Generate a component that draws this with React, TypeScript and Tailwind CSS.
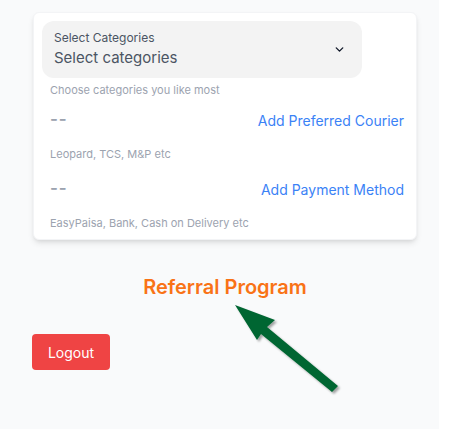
import { ChevronDown } from 'lucide-react'

const rows = [
  { action: 'Add Preferred Courier', hint: 'Leopard, TCS, M&P etc', gap: 'mt-[12px]' },
  { action: 'Add Payment Method', hint: 'EasyPaisa, Bank, Cash on Delivery etc', gap: 'mt-[17px]' },
]

function GuideArrow() {
  // annotation arrow pointing at the referral link
  return (
    <svg className="absolute left-[226px] top-[298px]" width="120" height="100" viewBox="0 0 120 100">
      <defs>
        <filter id="arrowShadow" x="-20%" y="-20%" width="140%" height="140%">
          <feDropShadow dx="2" dy="2" stdDeviation="1" floodColor="#000" floodOpacity="0.35" />
        </filter>
      </defs>
      <g filter="url(#arrowShadow)" fill="#006633">
        <polygon points="9,7 49,22 41,29 112,88 106,94 35,36 31,42" />
      </g>
    </svg>
  )
}

export default function App() {
  return (
    <div className="relative flex w-[468px] h-[429px] bg-white" style={{ fontFamily: 'Inter, "Noto Sans", sans-serif' }}>
      <div className="w-[439px] h-full bg-[#f9fafb] pl-[33px] pt-3">
        <div className="w-[384px] bg-white rounded-md shadow-md border border-gray-100 pt-2 pb-[8px]">
          <div className="mx-2 w-[320px] h-[57px] bg-[#f3f3f3] rounded-xl flex items-center justify-between pl-3 pr-4">
            <div className="flex flex-col">
              <span className="text-[12px] leading-4 text-[#4b5563]">Select Categories</span>
              <span className="text-[15px] leading-6 text-[#4b5563]">Select categories</span>
            </div>
            <ChevronDown size={13} strokeWidth={2.5} className="text-gray-900" />
          </div>
          <p className="pl-4 mt-[4px] text-[11px] leading-4 text-[#9ca3af]">Choose categories you like most</p>
          {rows.map((row) => (
            <div key={row.action} className="pl-4 pr-3">
              <div className={'flex items-center justify-between h-[20px] ' + row.gap}>
                <span className="text-[17px] text-[#9ca3af] font-semibold tracking-wider">--</span>
                <a className="text-[14px] text-[#3b82f6] hover:underline cursor-pointer">{row.action}</a>
              </div>
              <p className="mt-[16px] text-[11px] leading-4 text-[#9ca3af]">{row.hint}</p>
            </div>
          ))}
        </div>
        <div className="w-[384px] mt-[33px] text-center">
          <a className="text-[20px] leading-7 font-semibold text-[#f97316] cursor-pointer">Referral Program</a>
        </div>
        <button className="mt-[33px] -ml-px w-[78px] h-[36px] rounded bg-[#ef4444] text-white text-[14px]">Logout</button>
      </div>
      <GuideArrow />
    </div>
  )
}
